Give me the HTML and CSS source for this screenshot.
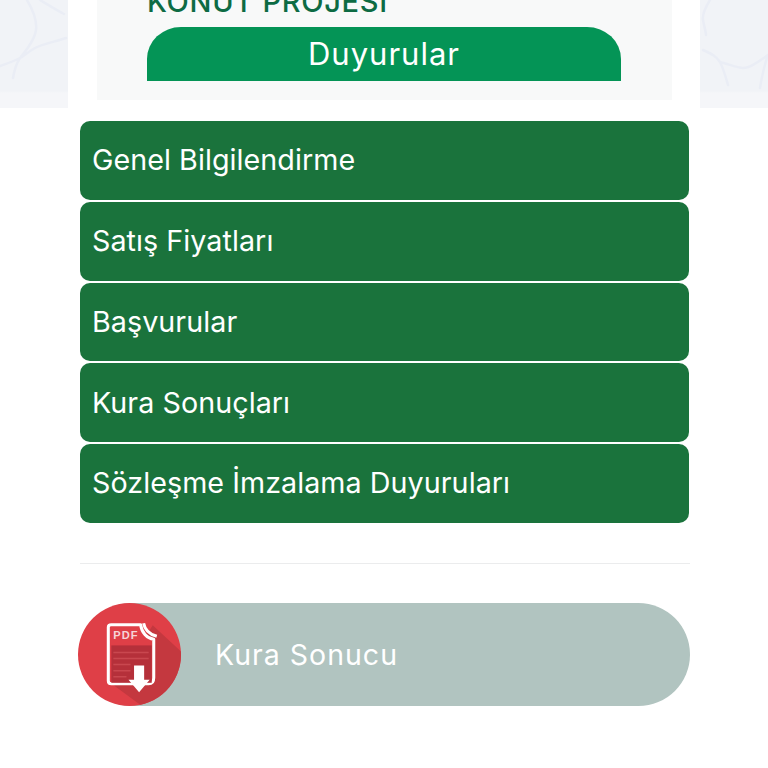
FILE: index.html
```html
<!DOCTYPE html>
<html lang="tr">
<head>
<meta charset="utf-8">
<title>Duyurular</title>
<link rel="stylesheet" href="styles.css">
</head>
<body>
<header class="hero">
  <svg class="map" viewBox="0 0 768 108" aria-hidden="true">
    <path d="M27 0C33 10 37 22 36 30C35 38 30 46 20 58C16 64 14 72 13 78M66 38C54 42 42 44 35 48C28 52 24 56 20 58C12 62 6 64 0 66M40 0C50 6 56 10 64 14"/>
    <path d="M710 0C705 8 702 14 703 20C704 26 706 32 706 35M703 50C712 54 716 56 720 62C724 70 726 78 728 85M720 62C728 64 738 68 743 68C750 68 758 62 768 55C764 66 762 76 760 88"/>
  </svg>
  <div class="sheet">
    <div class="panel">
      <h1 class="title">KONUT PROJESİ</h1>
      <h2 class="tab">Duyurular</h2>
    </div>
  </div>
</header>
<main class="content">
  <nav class="menu">
    <a class="item">Genel Bilgilendirme</a>
    <a class="item">Satış Fiyatları</a>
    <a class="item">Başvurular</a>
    <a class="item">Kura Sonuçları</a>
    <a class="item">Sözleşme İmzalama Duyuruları</a>
  </nav>
  <hr class="rule">
  <a class="download">
    <svg class="pdf" viewBox="0 0 102 102" aria-hidden="true">
      <defs><clipPath id="disc"><circle cx="51" cy="51" r="51"/></clipPath></defs>
      <circle cx="51" cy="51" r="51" fill="#df3f47"/>
      <path clip-path="url(#disc)" d="M74 22L104 50V104L66 104L36 82Z" fill="#c4383f"/>
      <path d="M33 21.500H62C63 29 68 35 75 36V74C75 78 73 80 70 80H33C31 80 30 79 30 77V24C30 22 31 21.500 33 21.500Z" fill="#df3f47" stroke="#fff" stroke-width="3" stroke-linejoin="round"/>
      <path d="M65 20C66 26 71 31 78 33" fill="none" stroke="#fff" stroke-width="3"/>
      <rect x="33" y="42" width="40" height="37" fill="#b5303a"/>
      <path d="M35 49H70M35 55H70M35 61H52M35 67H52M35 73H48" stroke="#c9474f" stroke-width="1.500"/>
      <path d="M55.500 62H65.500V76H71L60.500 88.500L50 76H55.500Z" fill="#fff"/>
      <text x="35" y="36" class="pdf-label">PDF</text>
    </svg>
    <span class="download-label">Kura Sonucu</span>
  </a>
</main>
</body>
</html>
```
FILE: styles.css
```css
* { box-sizing: border-box; }
html, body { margin: 0; padding: 0; background: #fff; }
body { font-family: Inter, "Open Sans", sans-serif; height: 768px; overflow: hidden; }

.hero {
  position: relative;
  height: 108px;
  background: linear-gradient(#f1f3f7 0, #f1f3f7 91px, #f5f6f9 93px);
  overflow: hidden;
  display: flex;
  justify-content: center;
  align-items: flex-end;
}
.map { position: absolute; inset: 0; width: 100%; height: 100%; }
.map path { fill: none; stroke: #eaedf5; stroke-width: 2.5; stroke-linecap: round; }

.sheet {
  position: relative;
  width: 632px;
  height: 108px;
  padding: 0 28px 8px 29px;
  background: #fff;
  display: flex;
  align-items: flex-end;
}
.panel {
  width: 100%;
  height: 100px;
  padding: 0 51px 19px 50px;
  background: #f8f9f9;
  display: flex;
  flex-direction: column;
  justify-content: flex-end;
}
.title {
  flex: none;
  margin: 0 0 12px;
  font-size: 29px;
  line-height: 27px;
  font-weight: 500;
  letter-spacing: 0.7px;
  color: #0d6b44;
  white-space: nowrap;
}
.tab {
  flex: none;
  margin: 0;
  height: 54px;
  border-radius: 34px 34px 0 0 / 32px 32px 0 0;
  background: #049456;
  color: #fff;
  font-size: 31px;
  font-weight: 400;
  letter-spacing: 1px;
  line-height: 53px;
  text-align: center;
}

.content { padding: 13px 78px 0 80px; }
.menu { display: flex; flex-direction: column; gap: 2px; margin-right: 1px; }
.item {
  display: flex;
  align-items: center;
  height: 78.75px;
  padding: 0 11px 1px 12px;
  border-radius: 10px;
  background: #1a733c;
  color: #fff;
  font-size: 28.7px;
  letter-spacing: 0.05px;
}
.rule {
  margin: 40px 0 39px;
  border: 0;
  border-top: 1px solid #ebeced;
}
.download {
  position: relative;
  display: flex;
  align-items: center;
  height: 103px;
  padding-left: 135px;
  border-radius: 52px;
  background: #b1c4c0;
  color: #fff;
  font-size: 28.5px;
  letter-spacing: 1px;
}
.pdf {
  position: absolute;
  left: -2px;
  top: 0;
  width: 103px;
  height: 103px;
}
.pdf-label { font: 700 11px "Liberation Sans", sans-serif; fill: #f6d5d7; }
```
